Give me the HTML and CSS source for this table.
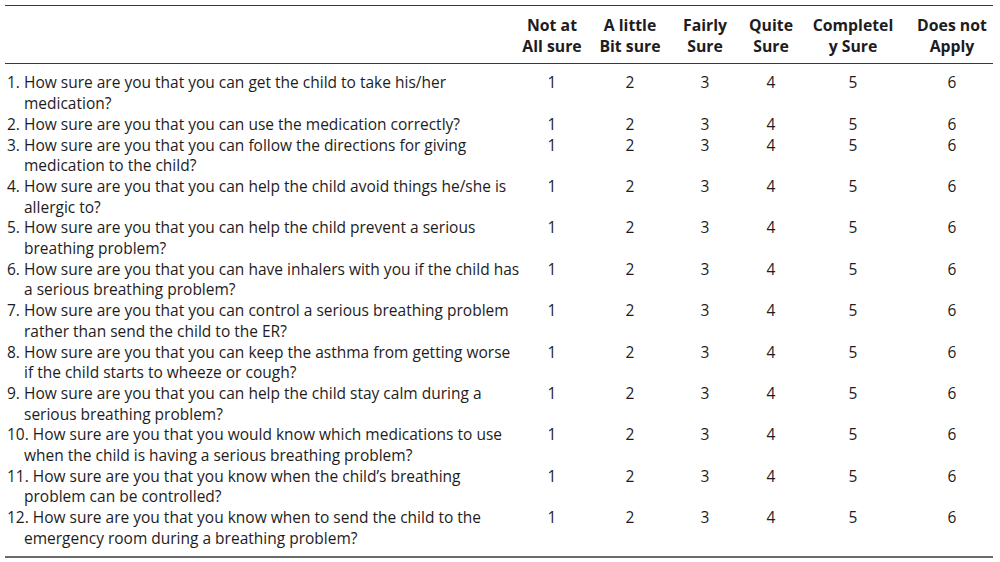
FILE: index.html
```html
<!DOCTYPE html>
<html>
<head>
<meta charset="utf-8">
<link rel="stylesheet" href="styles.css">
</head>
<body>
<table class="scale">
  <colgroup>
    <col class="c-q"><col class="c-a"><col class="c-b"><col class="c-c"><col class="c-d"><col class="c-e"><col class="c-f">
  </colgroup>
  <thead>
    <tr>
      <th class="q-head"></th>
      <th>Not at<br>All sure</th>
      <th>A little<br>Bit sure</th>
      <th>Fairly<br>Sure</th>
      <th>Quite<br>Sure</th>
      <th>Completel<br>y Sure</th>
      <th class="last">Does not<br>Apply</th>
    </tr>
  </thead>
  <tbody>
    <tr class="first"><td class="q">1. How sure are you that you can get the child to take his/her<br>medication?</td><td>1</td><td>2</td><td>3</td><td>4</td><td>5</td><td class="last">6</td></tr>
    <tr><td class="q">2. How sure are you that you can use the medication correctly?</td><td>1</td><td>2</td><td>3</td><td>4</td><td>5</td><td class="last">6</td></tr>
    <tr><td class="q">3. How sure are you that you can follow the directions for giving<br>medication to the child?</td><td>1</td><td>2</td><td>3</td><td>4</td><td>5</td><td class="last">6</td></tr>
    <tr><td class="q">4. How sure are you that you can help the child avoid things he/she is<br>allergic to?</td><td>1</td><td>2</td><td>3</td><td>4</td><td>5</td><td class="last">6</td></tr>
    <tr><td class="q">5. How sure are you that you can help the child prevent a serious<br>breathing problem?</td><td>1</td><td>2</td><td>3</td><td>4</td><td>5</td><td class="last">6</td></tr>
    <tr><td class="q">6. How sure are you that you can have inhalers with you if the child has<br>a serious breathing problem?</td><td>1</td><td>2</td><td>3</td><td>4</td><td>5</td><td class="last">6</td></tr>
    <tr><td class="q">7. How sure are you that you can control a serious breathing problem<br>rather than send the child to the ER?</td><td>1</td><td>2</td><td>3</td><td>4</td><td>5</td><td class="last">6</td></tr>
    <tr><td class="q">8. How sure are you that you can keep the asthma from getting worse<br>if the child starts to wheeze or cough?</td><td>1</td><td>2</td><td>3</td><td>4</td><td>5</td><td class="last">6</td></tr>
    <tr><td class="q">9. How sure are you that you can help the child stay calm during a<br>serious breathing problem?</td><td>1</td><td>2</td><td>3</td><td>4</td><td>5</td><td class="last">6</td></tr>
    <tr><td class="q">10. How sure are you that you would know which medications to use<br>when the child is having a serious breathing problem?</td><td>1</td><td>2</td><td>3</td><td>4</td><td>5</td><td class="last">6</td></tr>
    <tr><td class="q">11. How sure are you that you know when the child’s breathing<br>problem can be controlled?</td><td>1</td><td>2</td><td>3</td><td>4</td><td>5</td><td class="last">6</td></tr>
    <tr class="end"><td class="q">12. How sure are you that you know when to send the child to the<br>emergency room during a breathing problem?</td><td>1</td><td>2</td><td>3</td><td>4</td><td>5</td><td class="last">6</td></tr>
  </tbody>
</table>
</body>
</html>
```
FILE: styles.css
```css
html, body {
  margin: 0;
  padding: 0;
  background: #ffffff;
}
body {
  padding: 5px 0 0 5px;
  font-family: "Open Sans", "Lato", sans-serif;
  font-size: 15.5px;
  line-height: 20.7px;
  color: #1e1c1d;
}
.scale {
  width: 988px;
  table-layout: fixed;
  border-collapse: collapse;
  border-top: 1px solid #3a3a3a;
  border-bottom: 2px solid #6a6a6a;
}
.c-q { width: 508px; }
.c-a { width: 78px; }
.c-b { width: 78px; }
.c-c { width: 72px; }
.c-d { width: 60px; }
.c-e { width: 104px; }
.c-f { width: 88px; }
thead tr {
  border-bottom: 1px solid #3a3a3a;
}
th {
  font-weight: 700;
  font-size: 15.8px;
  text-align: center;
  vertical-align: top;
  padding: 9px 0 7px;
  white-space: nowrap;
}
td {
  padding: 0;
  text-align: center;
  vertical-align: top;
}
th.last, td.last {
  padding-left: 6px;
}
td.q {
  text-align: left;
  padding-left: 19px;
  text-indent: -17px;
  white-space: nowrap;
}
tr.first td {
  padding-top: 8px;
}
tr.end td {
  padding-bottom: 7px;
}
```
